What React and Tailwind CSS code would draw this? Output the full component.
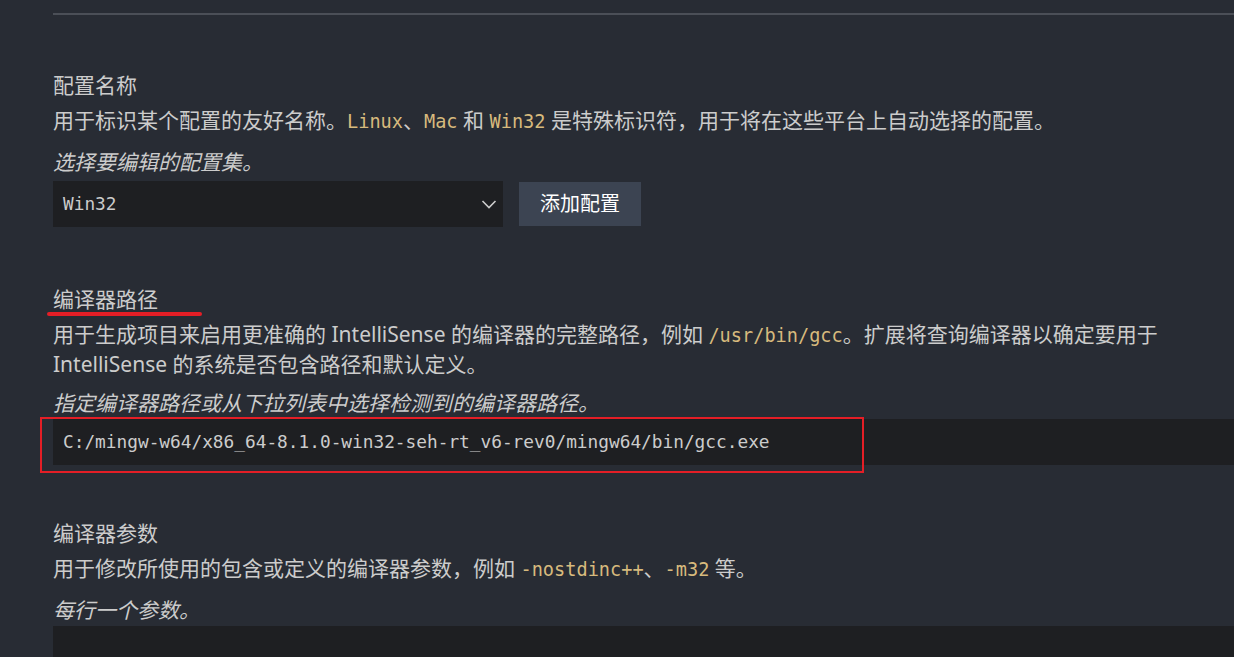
const sans = 'font-["Noto_Sans","Noto_Sans_CJK_SC",sans-serif]';
const mono = 'font-["DejaVu_Sans_Mono","Noto_Sans_CJK_SC",monospace]';

const Code = ({ children }) => (
  <span className={`${mono} text-[18.6px] text-[#d7ba7d]`}>{children}</span>
);

const Chevron = () => (
  <svg width="16" height="16" viewBox="0 0 16 16" fill="none" className="text-[#cccccc]">
    <path d="M1.5 5L8 11.5L14.5 5" stroke="currentColor" strokeWidth="1.6" />
  </svg>
);

export default function App() {
  return (
    <div className={`${sans} h-[657px] w-[1234px] overflow-hidden bg-[#282c34] pl-[53px] pt-[13px] text-[21px] text-[#cccccc]`}>
      <div className="h-[2px] w-full bg-[#4b4f57]" />

      {/* 配置名称 */}
      <section className="mt-[56px]">
        <div className="leading-[29px]">配置名称</div>
        <p className="mt-[6px] leading-[28px]">
          用于标识某个配置的友好名称。<Code>Linux</Code>、<Code>Mac</Code> 和 <Code>Win32</Code> 是特殊标识符，用于将在这些平台上自动选择的配置。
        </p>
        <p className="mt-[12px] italic leading-[28px]">选择要编辑的配置集。</p>
        <div className="mt-[5px] flex gap-4">
          <div className="flex h-[46px] w-[450px] items-center justify-between bg-[#1e1f22] pl-[10px] pr-[6px]">
            <span className={`${mono} text-[17.8px]`}>Win32</span>
            <Chevron />
          </div>
          <button className="mt-px h-[44px] bg-[#3c4452] px-[21px] text-[20px] text-white">添加配置</button>
        </div>
      </section>

      {/* 编译器路径 */}
      <section className="mt-[58px]">
        <div className="relative leading-[29px]">
          编译器路径
          <span className="absolute left-[-6px] top-[27px] h-[4px] w-[155px] rounded-full bg-[#e41e26]" />
        </div>
        <p className="mt-[6px] leading-[28px]">
          用于生成项目来启用更准确的 IntelliSense 的编译器的完整路径，例如 <Code>/usr/bin/gcc</Code>。扩展将查询编译器以确定要用于
          <br />
          IntelliSense 的系统是否包含路径和默认定义。
        </p>
        <p className="mt-[11px] italic leading-[28px]">指定编译器路径或从下拉列表中选择检测到的编译器路径。</p>
        <div className="relative mt-[2px]">
          <div className="flex h-[46px] w-full items-center bg-[#1e1f22] pl-[10px]">
            <span className={`${mono} text-[17.8px]`}>C:/mingw-w64/x86_64-8.1.0-win32-seh-rt_v6-rev0/mingw64/bin/gcc.exe</span>
          </div>
          <div className="absolute left-[-13px] top-[-2px] h-[56px] w-[824px] border-2 border-[#e41e26]" />
        </div>
      </section>

      {/* 编译器参数 */}
      <section className="mt-[54px]">
        <div className="leading-[29px]">编译器参数</div>
        <p className="mt-[6px] leading-[28px]">
          用于修改所使用的包含或定义的编译器参数，例如 <Code>-nostdinc++</Code>、<Code>-m32</Code> 等。
        </p>
        <p className="mt-[12px] italic leading-[28px]">每行一个参数。</p>
        <div className="mt-[2px] h-[32px] w-full bg-[#1e1f22]" />
      </section>
    </div>
  );
}
